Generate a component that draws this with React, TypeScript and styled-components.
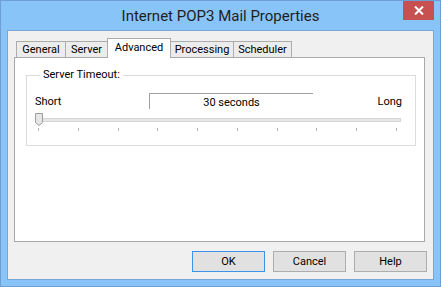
import * as React from "react";
import styled, { createGlobalStyle } from "styled-components";

const GlobalStyle = createGlobalStyle`
  html, body {
    margin: 0;
    padding: 0;
    background: #ffffff;
  }
  body {
    font-family: Roboto, "Liberation Sans", sans-serif;
    font-size: 11px;
    color: #000000;
  }
`;

const Window = styled.div`
  width: 441px;
  height: 287px;
  box-sizing: border-box;
  background: #88c4f8;
  border: 1px solid #6d9fd2;
  padding: 0 6px 6px;
  display: flex;
  flex-direction: column;
`;

const TitleBar = styled.div`
  height: 29px;
  display: grid;
  grid-template-columns: 1fr auto 1fr;
  align-items: start;
`;

const Title = styled.div`
  grid-column: 2;
  align-self: center;
  font-size: 15px;
  color: #1e1e1e;
  padding-top: 1px;
`;

const CloseButton = styled.div`
  grid-column: 3;
  justify-self: end;
  width: 31px;
  height: 19px;
  background: #c75050;
  display: flex;
  align-items: center;
  justify-content: center;
`;

const Client = styled.div`
  flex: 1;
  background: #f0f0f0;
  border: 1px solid #78a6d6;
  display: flex;
  flex-direction: column;
`;

const TabStrip = styled.div`
  height: 19px;
  margin-top: 7px;
  padding-left: 8px;
  display: flex;
  align-items: flex-end;
`;

const Tab = styled.div<{ $w: number; $active?: boolean }>`
  width: ${(p) => p.$w}px;
  height: ${(p) => (p.$active ? 20 : 16)}px;
  box-sizing: border-box;
  margin-left: -1px;
  margin-bottom: ${(p) => (p.$active ? -1 : 0)}px;
  position: relative;
  z-index: ${(p) => (p.$active ? 2 : 1)};
  border: 1px solid #acacac;
  border-bottom: 0;
  background: ${(p) => (p.$active ? "#ffffff" : "#ececec")};
  display: flex;
  align-items: center;
  justify-content: center;
  padding-bottom: ${(p) => (p.$active ? 3 : 0)}px;
  font-size: 11px;
  &:first-child {
    margin-left: 0;
  }
`;

const Panel = styled.div`
  height: 185px;
  box-sizing: border-box;
  margin: 0 0 0 6px;
  width: 411px;
  background: #ffffff;
  border: 1px solid #a9a9a9;
  padding-top: 10px;
  padding-left: 11px;
`;

const Group = styled.fieldset`
  margin: 0;
  width: 390px;
  box-sizing: border-box;
  border: 1px solid #dcdcdc;
  padding: 11px 13px 14px 8px;
  min-inline-size: 0;
`;

const Legend = styled.legend`
  padding: 0 3px;
  margin-left: 5px;
  line-height: 14px;
  font-size: 11px;
`;

const LabelRow = styled.div`
  display: grid;
  grid-template-columns: 114px 164px 1fr;
  height: 16px;
  align-items: center;
`;

const EdgeLabel = styled.span<{ $end?: boolean }>`
  justify-self: ${(p) => (p.$end ? "end" : "start")};
  padding-top: 1px;
`;

const ValueBox = styled.div`
  height: 16px;
  box-sizing: border-box;
  border-top: 1px solid #a0a0a0;
  border-left: 1px solid #a0a0a0;
  display: flex;
  align-items: center;
  justify-content: center;
  padding-top: 1px;
`;

const SliderArea = styled.div`
  position: relative;
  height: 13px;
  margin-top: 4px;
  display: flex;
  align-items: center;
`;

const Track = styled.div`
  flex: 1;
  margin: 0 1px;
  height: 4px;
  box-sizing: border-box;
  background: #e7e7e7;
  border: 1px solid #d6d6d6;
`;

const Thumb = styled.svg`
  position: absolute;
  left: 0;
  top: 0;
`;

const Ticks = styled.div`
  margin-top: 2px;
  height: 3px;
  display: flex;
  justify-content: space-between;
  padding: 0 5px 0 3px;
`;

const Tick = styled.div`
  width: 1px;
  height: 3px;
  background: #b4b4b4;
`;

const ButtonRow = styled.div`
  margin-top: 9px;
  padding-right: 6px;
  display: flex;
  justify-content: flex-end;
  gap: 8px;
`;

const Button = styled.div<{ $default?: boolean }>`
  width: 73px;
  height: 21px;
  box-sizing: border-box;
  background: #e1e1e1;
  border: 1px solid ${(p) => (p.$default ? "#3c94ea" : "#adadad")};
  display: flex;
  align-items: center;
  justify-content: center;
  font-size: 11px;
`;

const tabs = [
  { label: "General", w: 50 },
  { label: "Server", w: 43 },
  { label: "Advanced", w: 64, active: true },
  { label: "Processing", w: 64 },
  { label: "Scheduler", w: 59 },
];

export default function App() {
  return (
    <>
      <GlobalStyle />
      <Window>
        <TitleBar>
          <Title>Internet POP3 Mail Properties</Title>
          <CloseButton>
            <svg width="10" height="9" viewBox="0 0 10 9">
              <path d="M1 0.5 L9 8.5 M9 0.5 L1 8.5" stroke="#ffffff" strokeWidth="2" />
            </svg>
          </CloseButton>
        </TitleBar>
        <Client>
          <TabStrip>
            {tabs.map((t) => (
              <Tab key={t.label} $w={t.w} $active={t.active}>
                {t.label}
              </Tab>
            ))}
          </TabStrip>
          <Panel>
            <Group>
              <Legend>Server Timeout:</Legend>
              <LabelRow>
                <EdgeLabel>Short</EdgeLabel>
                <ValueBox>30 seconds</ValueBox>
                <EdgeLabel $end>Long</EdgeLabel>
              </LabelRow>
              <SliderArea>
                <Track />
                <Thumb width="8" height="13" viewBox="0 0 8 13">
                  <path
                    d="M0.5 0.5 H7.5 V9.5 L4 12.5 L0.5 9.5 Z"
                    fill="#e6e6e6"
                    stroke="#9c9c9c"
                  />
                </Thumb>
              </SliderArea>
              <Ticks>
                {Array.from({ length: 10 }).map((_, i) => (
                  <Tick key={i} />
                ))}
              </Ticks>
            </Group>
          </Panel>
          <ButtonRow>
            <Button $default>OK</Button>
            <Button>Cancel</Button>
            <Button>Help</Button>
          </ButtonRow>
        </Client>
      </Window>
    </>
  );
}
